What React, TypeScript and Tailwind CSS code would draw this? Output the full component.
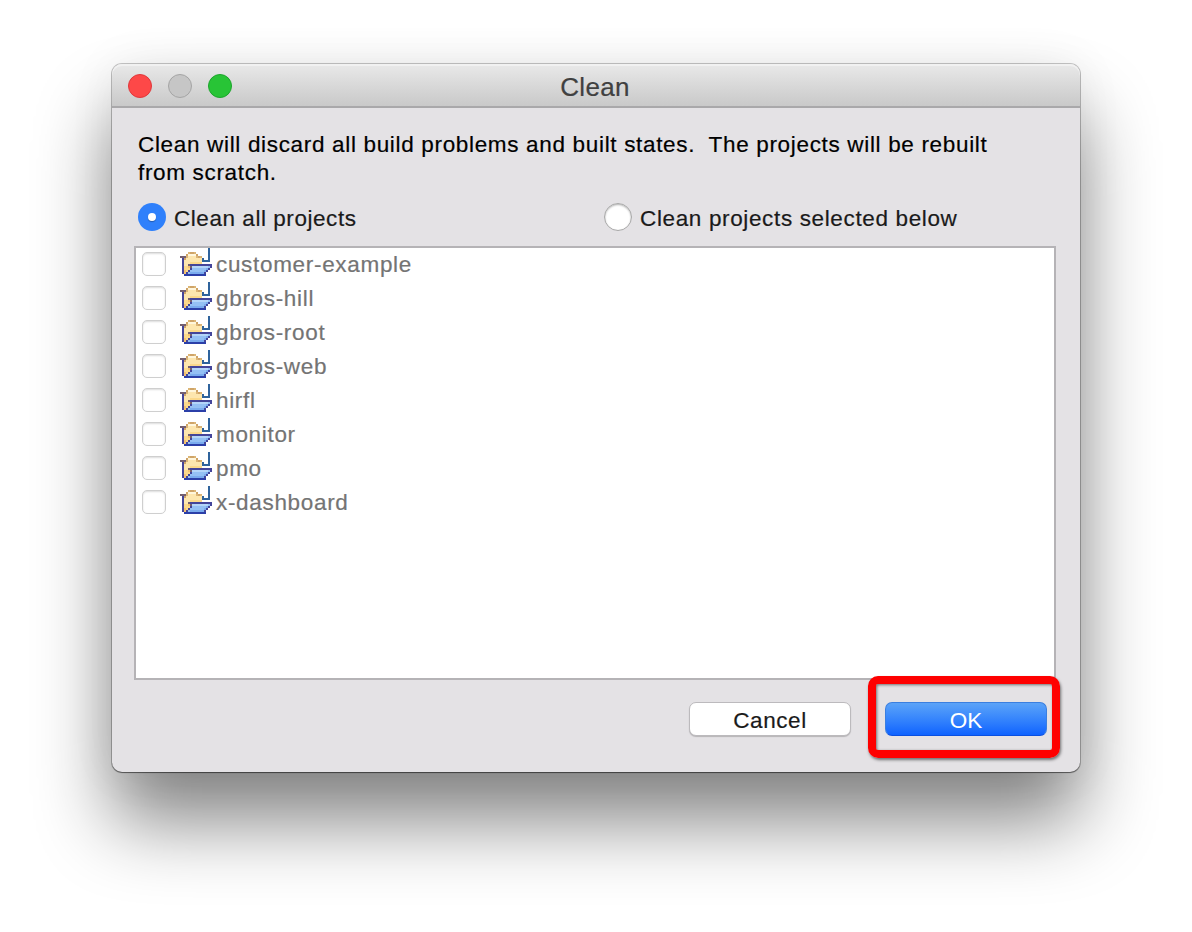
import React from "react";

const projects = [
  "customer-example",
  "gbros-hill",
  "gbros-root",
  "gbros-web",
  "hirfl",
  "monitor",
  "pmo",
  "x-dashboard",
];

// One character per pixel of the 16 x 14 project icon.
const palette: Record<string, string> = {
  J: "#2f639c",
  j: "#7fa3c6",
  t: "#dcb677",
  T: "#cfa468",
  w: "#fff6dc",
  y: "#fde6ae",
  o: "#fbd98c",
  O: "#f3c070",
  b: "#75606f",
  n: "#44459a",
  d: "#2b3fa8",
  l: "#b4d5f9",
  m: "#94c0f4",
  e: "#7aabee",
};

const pixels = [
  "..............J.",
  "..............J.",
  "....tTTt......J.",
  "...TwwwwT.....J.",
  "bbbtyyyytTt...J.",
  ".nTyyyyyyyyJ..J.",
  ".nyyyyyyyyyJJJJ.",
  ".nyyyoooooo.....",
  ".nyybnnnnnnnnnnn",
  ".nooObllllllllmn",
  ".nooonmmmmmmmen.",
  ".nOonmmmmmmmen..",
  ".nOnmeeeeeeen...",
  "..ddddddddddd...",
];

function ProjectIcon() {
  return (
    <svg className="mb-1 h-7 w-8 shrink-0" viewBox="0 0 16 14" shapeRendering="crispEdges" aria-hidden="true">
      {pixels.flatMap((row, y) =>
        row.split("").map((c, x) =>
          c === "." ? null : <rect key={`${x}-${y}`} x={x} y={y} width="1" height="1" fill={palette[c]} />
        )
      )}
    </svg>
  );
}

export default function App() {
  return (
    <div className="h-[932px] w-[1192px] overflow-hidden bg-white px-[112px] pt-16 font-['Liberation_Sans',sans-serif] text-[22.5px] [-webkit-text-stroke:0.2px_currentColor]">
      <div className="flex h-[708px] w-[968px] flex-col rounded-[10px] bg-[#e4e2e5] shadow-[0_0_0_1px_rgba(0,0,0,0.22),0_1px_1px_rgba(0,0,0,0.4),0_50px_76px_rgba(0,0,0,0.48),0_0_50px_rgba(0,0,0,0.06)]">
        <header className="grid h-11 shrink-0 grid-cols-[1fr_auto_1fr] items-center rounded-t-[10px] border-b-2 border-[#a9a8aa] bg-linear-to-b from-[#e9e9e9] to-[#c9c9c9] px-4 pt-0.5 shadow-[inset_0_2px_0_#f1f1f1]">
          <div className="flex gap-4 pb-0.5">
            <span className="size-6 rounded-full border border-[#e0383b] bg-[#fd4848]" />
            <span className="size-6 rounded-full border border-[#a5a5a5] bg-[#c6c6c6]" />
            <span className="size-6 rounded-full border border-[#1ca52c] bg-[#28c436]" />
          </div>
          <h1 className="-ml-0.5 pt-0.5 text-[26px] tracking-[0.3px] text-[#404040]">Clean</h1>
          <span />
        </header>
        <main className="flex flex-1 flex-col px-[22px] pt-[23px]">
          <p className="pl-1 leading-[28px] tracking-[0.67px] whitespace-pre text-black">
            Clean will discard all build problems and built states.  The projects will be rebuilt<br />from scratch.
          </p>
          <div className="mt-4 flex h-7 items-center pl-1 text-[#1a1a1a]">
            <label className="flex w-[466px] items-center gap-2">
              <span className="flex size-7 items-center justify-center rounded-full bg-[#2f80fb]">
                <span className="size-2 rounded-full bg-white shadow-[0_1px_1px_rgba(0,0,0,0.3)]" />
              </span>
              <span className="pt-[3px] leading-7 tracking-[0.55px]">Clean all projects</span>
            </label>
            <label className="flex items-center gap-2">
              <span className="size-7 rounded-full border border-[#a8a8a8] bg-white shadow-[inset_0_1px_2px_rgba(0,0,0,0.3)]" />
              <span className="pt-[3px] leading-7 tracking-[0.64px]">Clean projects selected below</span>
            </label>
          </div>
          <ul className="mt-[15px] h-[434px] w-[922px] border-2 border-[#b5b3b6] bg-white">
            {projects.map((name) => (
              <li key={name} className="flex h-[34px] items-center pb-0.5 pl-1.5 text-[#747474]">
                <span className="mr-3.5 size-6 rounded-[5px] border border-[#cfcfcf] bg-white shadow-[inset_0_1px_2px_rgba(0,0,0,0.14)]" />
                <ProjectIcon />
                <span className="ml-1 pt-px tracking-[0.68px]">{name}</span>
              </li>
            ))}
          </ul>
          <div className="flex items-start justify-end pr-[11px] pt-[22px]">
            <button className="h-[34px] w-[162px] rounded-[7px] border border-[#bcbabd] bg-white pt-px tracking-[0.6px] text-[#1a1a1a] shadow-[0_1px_1px_rgba(0,0,0,0.2)]">Cancel</button>
            <div className="relative ml-[34px]">
              <button className="block h-[34px] w-[162px] rounded-[7px] border border-[#3a7fe0] border-b-[#0a4fe0] bg-linear-to-b from-[#5ba3f8] to-[#0e62ff] pt-px text-white [-webkit-text-stroke:0]">OK</button>
              <span className="absolute -top-[26px] -left-[17px] h-[82px] w-[192px] rounded-[10px] border-8 border-[#fe0000] shadow-[1px_2px_3px_rgba(0,0,0,0.5),inset_1px_1px_3px_rgba(0,0,0,0.5)]" />
            </div>
          </div>
        </main>
      </div>
    </div>
  );
}
